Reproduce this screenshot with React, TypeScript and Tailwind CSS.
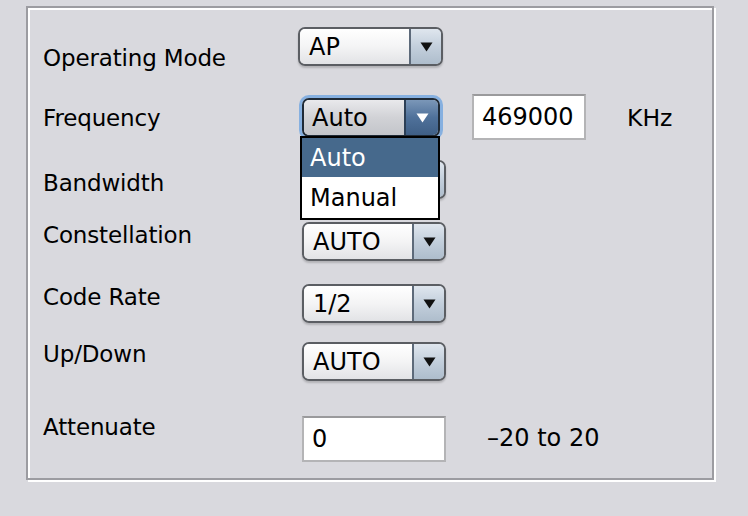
import React from 'react'

const font = { fontFamily: '"DejaVu Sans", "Liberation Sans", sans-serif' }

function Arrow({ white = false }: { white?: boolean }) {
  return (
    <svg width="13" height="10" viewBox="0 0 13 10">
      <path d="M0.5 0.5 L12.5 0.5 L6.5 9.5 Z" fill={white ? '#ffffff' : '#111111'} />
    </svg>
  )
}

function Combo({ value, width = 'w-[144px]' }: { value: string; width?: string }) {
  return (
    <div
      className={`${width} h-[39px] flex rounded-[7px] border-2 border-[#5b5e63] overflow-hidden shadow-[0_2px_2px_rgba(0,0,0,0.18)]`}
    >
      <div className="flex-1 flex items-center pl-[9px] bg-gradient-to-b from-[#ffffff] via-[#f4f4f5] to-[#e2e3e6] text-[24px] text-black leading-none">
        {value}
      </div>
      <div className="w-[32px] flex items-center justify-center border-l-2 border-[#5d6a7a] bg-gradient-to-b from-[#dfe6ee] via-[#c3cfdc] to-[#aebdcc]">
        <Arrow />
      </div>
    </div>
  )
}

function FocusedCombo() {
  return (
    <div className="relative ml-[4px] mt-[4px]">
      <div className="w-[138px] h-[39px] flex rounded-[7px] border-2 border-[#1f2a36] overflow-hidden shadow-[0_0_0_3px_#86b0e0]">
        <div className="flex-1 flex items-center pl-[8px] bg-gradient-to-b from-[#e9e9ec] via-[#d1d2d6] to-[#c3c5ca] text-[24px] text-black leading-none">
          Auto
        </div>
        <div className="w-[34px] flex items-center justify-center border-l-2 border-[#2c3f56] bg-gradient-to-b from-[#7b97b8] via-[#4f719a] to-[#3f5f86]">
          <Arrow white />
        </div>
      </div>
      <div className="absolute left-[-2px] top-[38px] w-[140px] h-[84px] border-2 border-black bg-white z-10 flex flex-col text-[24px] leading-none">
        <div className="h-[39px] flex items-center pl-[8px] bg-[#46698c] text-white">Auto</div>
        <div className="h-[41px] flex items-center pl-[8px] text-black">Manual</div>
      </div>
    </div>
  )
}

function Field({ value, width }: { value: string; width: string }) {
  return (
    <div
      className={`${width} h-[46px] flex items-center pl-[8px] bg-white border-2 border-[#b4b4b6] border-t-[#9a9a9c] text-[24px] text-black leading-none`}
    >
      {value}
    </div>
  )
}

function Label({ text, pt }: { text: string; pt: string }) {
  return (
    <div className={`w-[255px] shrink-0 ${pt} text-[23px] leading-[28px] text-black tracking-[-0.15px]`}>
      {text}
    </div>
  )
}

export default function App() {
  return (
    <div className="w-[748px] h-[516px] bg-[#d9d9de] pt-[6px] pl-[26px]" style={font}>
      <div className="w-[688px] h-[474px] border-2 border-[#9c9ca1] shadow-[inset_2px_2px_0_#ffffff,2px_2px_0_#ffffff] flex flex-col pl-[15px] pt-[19px]">
        <div className="h-[67px] flex items-start">
          <Label text="Operating Mode" pt="pt-[17px]" />
          <Combo value="AP" width="w-[145px]" />
        </div>

        <div className="h-[66px] flex items-start relative z-10">
          <Label text="Frequency" pt="pt-[10px]" />
          <FocusedCombo />
          <div className="ml-[32px]">
            <Field value="469000" width="w-[114px]" />
          </div>
          <div className="ml-[41px] pt-[10px] text-[23.5px] leading-[28px]">KHz</div>
        </div>

        <div className="h-[61px] flex items-start">
          <Label text="Bandwidth" pt="pt-[9px]" />
          <div className="ml-[4px]">
            <Combo value="" />
          </div>
        </div>

        <div className="h-[62px] flex items-start">
          <Label text="Constellation" pt="pt-0" />
          <div className="ml-[4px] mt-[1px]">
            <Combo value="AUTO" />
          </div>
        </div>

        <div className="h-[57px] flex items-start">
          <Label text="Code Rate" pt="pt-0" />
          <div className="ml-[4px] mt-[1px]">
            <Combo value="1/2" />
          </div>
        </div>

        <div className="h-[73px] flex items-start">
          <Label text="Up/Down" pt="pt-0" />
          <div className="ml-[4px] mt-[2px]">
            <Combo value="AUTO" />
          </div>
        </div>

        <div className="flex items-start">
          <Label text="Attenuate" pt="pt-0" />
          <div className="ml-[4px] mt-[3px]">
            <Field value="0" width="w-[144px]" />
          </div>
          <div className="ml-[41px] pt-[11px] text-[24px] leading-[28px]">–20 to 20</div>
        </div>
      </div>
    </div>
  )
}
